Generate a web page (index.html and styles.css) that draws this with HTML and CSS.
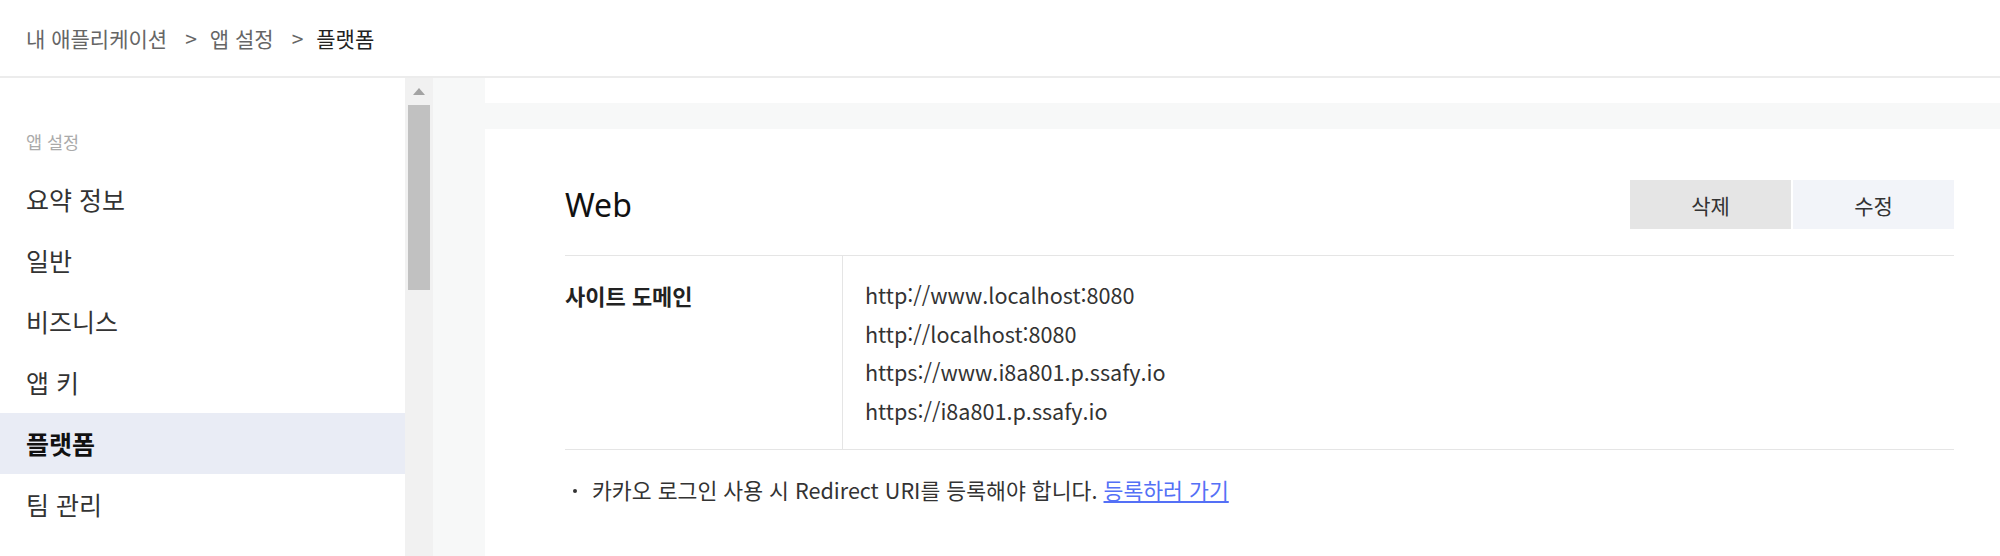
FILE: index.html
```html
<!DOCTYPE html>
<html lang="ko">
<head>
<meta charset="utf-8">
<title>플랫폼</title>
<link rel="stylesheet" href="styles.css">
</head>
<body>
<div class="page">
  <header class="topbar">
    <nav class="crumbs">
      <span class="crumb">내 애플리케이션</span>
      <span class="sep">&gt;</span>
      <span class="crumb">앱 설정</span>
      <span class="sep">&gt;</span>
      <span class="crumb current">플랫폼</span>
    </nav>
  </header>
  <div class="body">
    <aside class="side">
      <div class="side-inner">
        <div class="side-label">앱 설정</div>
        <ul class="menu">
          <li class="menu-item">요약 정보</li>
          <li class="menu-item">일반</li>
          <li class="menu-item">비즈니스</li>
          <li class="menu-item">앱 키</li>
          <li class="menu-item active">플랫폼</li>
          <li class="menu-item">팀 관리</li>
        </ul>
      </div>
      <div class="scrollbar">
        <div class="scroll-btn"><span class="arrow"></span></div>
        <div class="thumb"></div>
      </div>
    </aside>
    <main class="main">
      <div class="prev-card"></div>
      <section class="card">
        <div class="card-head">
          <h2 class="card-title">Web</h2>
          <div class="btns">
            <button class="btn btn-del">삭제</button>
            <button class="btn btn-edit">수정</button>
          </div>
        </div>
        <div class="info">
          <div class="info-th">사이트 도메인</div>
          <div class="info-td">
            <p class="url">http://www.localhost:8080</p>
            <p class="url">http://localhost:8080</p>
            <p class="url">https://www.i8a801.p.ssafy.io</p>
            <p class="url">https://i8a801.p.ssafy.io</p>
          </div>
        </div>
        <ul class="notes">
          <li class="note">카카오 로그인 사용 시 Redirect URI를 등록해야 합니다. <a class="note-link" href="#">등록하러 가기</a></li>
        </ul>
      </section>
    </main>
  </div>
</div>
</body>
</html>
```
FILE: styles.css
```css
* { box-sizing: border-box; }
html, body { margin: 0; padding: 0; }
body {
  width: 2000px;
  height: 556px;
  overflow: hidden;
  background: #fff;
  font-family: "Noto Sans CJK KR", "Noto Sans", sans-serif;
  color: #333;
}
.page { display: flex; flex-direction: column; height: 556px; }

.topbar {
  height: 78px;
  border-bottom: 2px solid #ececec;
  display: flex;
  align-items: center;
  padding-left: 26px;
  flex-shrink: 0;
}
.crumbs { display: flex; align-items: center; font-size: 21px; line-height: 30px; color: #666; }
.crumb.current { color: #222; }
.sep { margin: 0 13px 0 18px; color: #666; }

.body { flex: 1; display: flex; min-height: 0; }

.side { width: 433px; display: flex; flex-shrink: 0; }
.side-inner { width: 405px; padding-top: 52px; }
.side-label { padding-left: 26px; font-size: 17.5px; line-height: 24px; color: #aaa; margin-bottom: 15px; }
.menu { list-style: none; margin: 0; padding: 0; }
.menu-item { height: 61px; line-height: 61px; padding-left: 26px; font-size: 25px; color: #333; }
.menu-item.active { background: #e9ecf5; color: #111; font-weight: 700; }

.scrollbar { width: 28px; background: #f1f1f1; display: flex; flex-direction: column; align-items: center; }
.scroll-btn { height: 27px; width: 100%; display: flex; justify-content: center; padding-top: 10px; }
.arrow { width: 0; height: 0; border-left: 6px solid transparent; border-right: 6px solid transparent; border-bottom: 7px solid #a3a3a3; }
.thumb { width: 22px; height: 185px; background: #c1c1c1; }

.main { flex: 1; background: #f7f8f8; padding-left: 52px; display: flex; flex-direction: column; }
.prev-card { height: 25px; background: #fff; margin-bottom: 26px; }
.card { flex: 1; background: #fff; padding: 51px 46px 0 80px; }

.card-head { display: flex; justify-content: space-between; align-items: center; height: 49px; }
.card-title { margin: 0; font-family: "Noto Sans", sans-serif; font-weight: 400; font-size: 32px; color: #111; line-height: 40px; }
.btns { display: flex; gap: 2px; }
.btn {
  width: 161px; height: 49px; border: 0; margin: 0; padding: 0;
  font-family: "Noto Sans CJK KR", sans-serif; font-size: 21px; color: #333;
}
.btn-del { background: #e5e5e5; }
.btn-edit { background: #f2f4f9; }

.info { display: flex; margin-top: 26px; border-top: 1px solid #e5e5e5; border-bottom: 1px solid #e5e5e5; }
.info-th { width: 278px; flex-shrink: 0; border-right: 1px solid #e5e5e5; padding-top: 21px; font-size: 22px; line-height: 36px; font-weight: 700; color: #222; }
.info-td { padding: 20px 0 19px 22px; }
.url { margin: 0; font-size: 21.6px; line-height: 38.5px; color: #333; }

.notes { list-style: none; margin: 25px 0 0; padding: 0; }
.note { position: relative; padding-left: 27px; font-size: 21.6px; line-height: 30px; color: #333; }
.note::before { content: ""; position: absolute; left: 8px; top: 14px; width: 4px; height: 4px; border-radius: 50%; background: #333; }
.note-link { color: #5470f6; text-decoration: underline; }
```
